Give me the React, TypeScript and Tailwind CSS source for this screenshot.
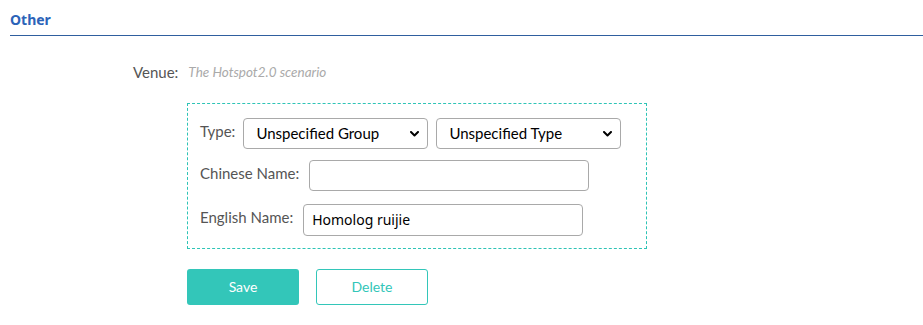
function Chevron() {
  return (
    <svg className="absolute right-[8px] top-[12px]" width="9" height="6" viewBox="0 0 9 6" fill="none">
      <path d="M1 1l3.5 3.5L8 1" stroke="#000" strokeWidth="2" strokeLinecap="round" strokeLinejoin="round" />
    </svg>
  );
}

function Select({ value }: { value: string }) {
  return (
    <div className="relative flex h-[31px] w-[185px] items-center rounded border border-[#a9a9a9] bg-white pl-[12px] text-[15px] text-black">
      <span>{value}</span>
      <Chevron />
    </div>
  );
}

export default function App() {
  return (
    <div className="h-[325px] w-[923px] bg-white font-['Lato','Noto_Sans',sans-serif] text-[15px] text-[#555]">
      <div className="pl-[10px] pt-[10px]">
        <h2 className="font-['Noto_Sans',sans-serif] text-[14px] font-bold leading-[20px] text-[#2b63b8]">Other</h2>
        <div className="mt-[5px] h-px bg-[#2f5f9f]" />
      </div>

      <div className="mt-[25px] flex items-center pl-[133px]">
        <span className="text-[15px] text-[#555]">Venue:</span>
        <span className="ml-[10px] text-[13.5px] italic text-[#aaa]">The Hotspot2.0 scenario</span>
      </div>

      <div className="ml-[187px] mt-[19px] flex h-[146px] w-[460px] flex-col gap-[11px] border border-dashed border-[#2ec4b6] pl-[12px] pt-[14px]">
        <div className="flex items-center gap-[8px]">
          <span className="-mt-[4px]">Type:</span>
          <Select value="Unspecified Group" />
          <Select value="Unspecified Type" />
        </div>
        <div className="flex items-center gap-[10px]">
          <span className="-mt-[4px]">Chinese Name:</span>
          <input className="h-[31px] w-[280px] rounded border border-[#a9a9a9] px-[8px] text-[15px] text-black outline-none" />
        </div>
        <div className="mt-[2px] flex items-center gap-[10px]">
          <span className="-mt-[4px]">English Name:</span>
          <input
            defaultValue="Homolog ruijie"
            className="h-[32px] w-[280px] rounded border border-[#a9a9a9] px-[8px] font-['Noto_Sans',sans-serif] text-[14px] text-black outline-none"
          />
        </div>
      </div>

      <div className="ml-[187px] mt-[20px] flex gap-[17px]">
        <button className="h-[36px] w-[112px] rounded-[3px] bg-[#33c6b9] text-[14px] text-white">Save</button>
        <button className="h-[36px] w-[112px] rounded-[3px] border border-[#33c6b9] bg-white text-[14px] text-[#33c6b9]">
          Delete
        </button>
      </div>
    </div>
  );
}
